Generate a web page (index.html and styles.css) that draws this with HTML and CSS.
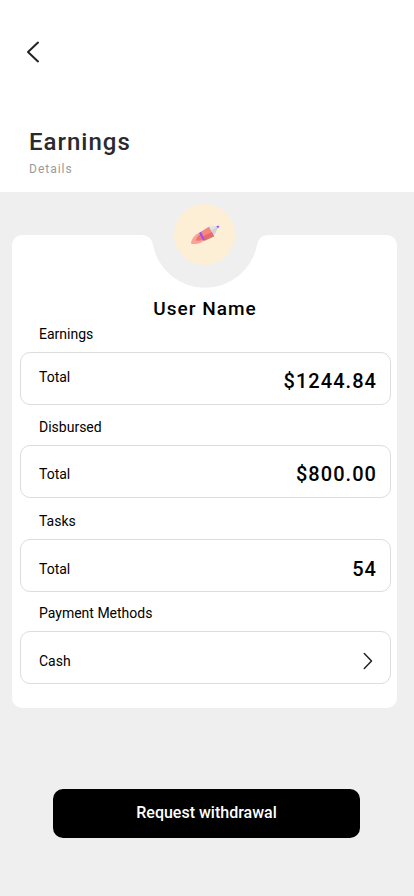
FILE: index.html
```html
<!DOCTYPE html>
<html lang="en">
<head>
<meta charset="utf-8">
<meta name="viewport" content="width=device-width, initial-scale=1">
<title>Earnings</title>
<link rel="stylesheet" href="styles.css">
</head>
<body>
<header class="header">
  <svg class="back" width="14" height="22" viewBox="0 0 14 22"><path d="M12 1.6 2 11l10 9.4"/></svg>
  <h1 class="title">Earnings</h1>
  <p class="subtitle">Details</p>
</header>
<main class="card">
  <svg class="card-shape" width="385" height="473" viewBox="0 0 385 473"><path d="M10 0H130Q139 0 141 10A53 53 0 0 0 245 10Q247 0 256 0H375A10 10 0 0 1 385 10V463A10 10 0 0 1 375 473H10A10 10 0 0 1 0 463V10A10 10 0 0 1 10 0Z"/></svg>
  <div class="avatar">
    <svg width="30" height="20" viewBox="0 0 30 20">
      <path fill="#f7a39b" d="M11 7.200C6 8.500 1.500 12.500 .9 18.600 5.500 20 11.500 18.500 15 14.500Z"/>
      <path fill="#ed7770" d="M11.500 8.500Q6.500 11 5.800 15.500 10.500 16.500 14 14Z"/>
      <path fill="#f28880" d="M10.500 6.900 19.200 1.600 24.200 11.300 14.500 15.800Z"/>
      <path fill="#e36e69" d="M12.700 11.500 22 7 24.200 11.300 14.500 15.800Z"/>
      <path fill="#cfd3d8" d="M19.400 2 29 .8 24.200 10.500Z"/>
      <path fill="#e2e5e8" d="M19.400 2 29 .8 21.200 5.500Z"/>
      <path fill="#9859ed" d="M26.200 1.100 29.600.7 28 3.500Z"/>
      <path fill="#a34cf6" d="M9 7.900 11 6.800 14.900 14.800 13.200 15.800Z"/>
    </svg>
  </div>
  <h2 class="name">User Name</h2>
  <h3 class="label">Earnings</h3>
  <div class="box box-first"><span>Total</span><strong>$1244.84</strong></div>
  <h3 class="label">Disbursed</h3>
  <div class="box"><span>Total</span><strong>$800.00</strong></div>
  <h3 class="label label-tasks">Tasks</h3>
  <div class="box box-tasks"><span>Total</span><strong>54</strong></div>
  <h3 class="label label-payment">Payment Methods</h3>
  <div class="box box-cash"><span>Cash</span><svg class="next" width="10" height="18" viewBox="0 0 10 18"><path d="M1.300 1.600 8.500 9l-7.200 7.400"/></svg></div>
</main>
<button class="button">Request withdrawal</button>
</body>
</html>
```
FILE: styles.css
```css
* { box-sizing: border-box; }
body {
  margin: 0;
  min-height: 896px;
  background: #efefef;
  color: #000;
  font-family: Roboto, sans-serif;
  font-size: 14px;
}
h1, h2, h3, p { margin: 0; }
svg { display: block; }
.header {
  height: 192px;
  padding: 41px 29px 0;
  background: #fff;
}
.back, .next {
  fill: none;
  stroke: #222226;
  stroke-width: 2;
  stroke-linecap: round;
  stroke-linejoin: round;
}
.back { margin-left: -3px; }
.title {
  margin-top: 65px;
  line-height: 28px;
  font-size: 24px;
  font-weight: 500;
  letter-spacing: 1px;
  color: #2a2a2e;
}
.subtitle {
  margin-top: 6px;
  line-height: 14px;
  font-size: 12px;
  letter-spacing: 1px;
  color: #9a9a9c;
}
.card {
  display: flow-root;
  position: relative;
  width: 385px;
  height: 473px;
  margin: 43px 0 0 12px;
  padding: 0 6px 0 8px;
}
.card-shape {
  position: absolute;
  z-index: -1;
  top: 0;
  left: 0;
  fill: #fff;
}
.avatar {
  display: flex;
  align-items: center;
  justify-content: center;
  width: 61px;
  height: 61px;
  margin: -31px 0 0 154px;
  border-radius: 50%;
  background: #fdefd6;
}
.name {
  margin-top: 33px;
  padding-right: 1px;
  line-height: 21px;
  text-align: center;
  font-size: 19px;
  font-weight: 500;
  letter-spacing: 1px;
}
.label {
  height: 33px;
  padding: 6px 19px 0;
  line-height: 18px;
  font-size: 14px;
  font-weight: 400;
}
.box {
  display: flex;
  align-items: center;
  justify-content: space-between;
  width: 371px;
  height: 53px;
  margin-bottom: 7px;
  padding: 5px 13px 0 18px;
  border: 1px solid #ddd;
  border-radius: 10px;
}
.box strong {
  font-size: 20px;
  font-weight: 500;
  letter-spacing: 1.05px;
}
.box-first span { margin-top: -8px; }
.box-tasks { padding-top: 7px; }
.label-tasks { height: 34px; padding-top: 7px; }
.label-payment { height: 32px; padding-top: 5px; }
.box-cash { padding-top: 7px; padding-right: 17px; }
.next { stroke-width: 1.5; }
.button {
  display: block;
  width: 307px;
  height: 49px;
  margin: 81px 0 0 53px;
  padding: 0 0 2px;
  border: 0;
  border-radius: 10px;
  background: #000;
  color: #fff;
  font: 500 16px Roboto, sans-serif;
}
```
